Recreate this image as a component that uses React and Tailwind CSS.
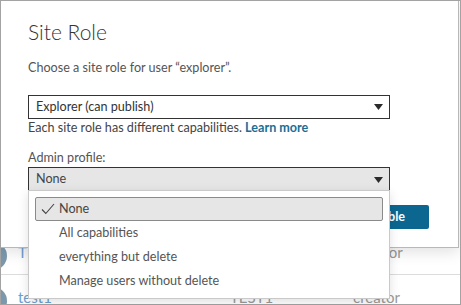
import React from 'react';

const font = { fontFamily: 'Lato, "Open Sans", sans-serif' };

const Caret = () => (
    <svg width="9" height="6" viewBox="0 0 9 6" className="shrink-0">
        <path d="M0 0 H9 L4.5 6 Z" fill="#2b2b2b" />
    </svg>
);

const Check = () => (
    <svg width="14" height="12" viewBox="0 0 14 12">
        <path d="M1 6.5 L4.8 10.5 L13 1" fill="none" stroke="#444" strokeWidth="1.1" />
    </svg>
);

const options = ['None', 'All capabilities', 'everything but delete', 'Manage users without delete'];

const users = [
    { name: 'T', full: '', role: 'Creator' },
    { name: 'test1', full: 'TEST1', role: 'creator' },
];

export default function App() {
    return (
        <div className="w-[461px] h-[305px] relative overflow-hidden bg-white text-[12.6px]" style={font}>
            {/* page behind the dialog */}
            <div className="pt-[230px]">
                {users.map((u, i) => (
                    <div key={i} className="flex items-center h-[45px] border-b border-[#dcdcdc] text-[15px]">
                        <div className="w-[28px] h-[28px] rounded-full bg-[#7b98ad] -ml-[21px] mr-[11px] mt-[8px] shrink-0"></div>
                        <span className="text-[#6d9ed0] w-[212px]">{u.name}</span>
                        <span className="text-[#9a9a9a] w-[123px]">{u.full}</span>
                        <span className="text-[#9a9a9a]">{u.role}</span>
                    </div>
                ))}
            </div>

            {/* dialog */}
            <div className="absolute left-0 top-0 w-[459px] h-[248px] bg-white border border-[#b8b8b8] shadow-[0_4px_14px_rgba(0,0,0,0.12)] pl-[27px] pr-[29px] pt-[17px]">
                <h2 className="text-[21px] font-light text-[#333] leading-[28px]">Site Role</h2>
                <p className="mt-[14px] text-[#555] leading-[16px]">Choose a site role for user “explorer”.</p>

                <div className="mt-[19px] w-[362px] h-[24px] border border-[#333] flex items-center justify-between pl-[7px] pr-[6px] text-[#333]">
                    <span>Explorer (can publish)</span>
                    <Caret />
                </div>
                <p className="mt-[1px] text-[#444] leading-[16px]">
                    Each site role has different capabilities. <span className="font-bold text-[#1a6e96]">Learn more</span>
                </p>

                <p className="mt-[14px] text-[#555] leading-[16px]">Admin profile:</p>
                <div className="relative mt-[1px] w-[362px]">
                    <div className="h-[24px] bg-[#e6e6e6] border border-b-0 border-[#333] flex items-center justify-between pl-[7px] pr-[6px] text-[#444]">
                        <span>None</span>
                        <Caret />
                    </div>

                    {/* open menu */}
                    <div className="absolute left-0 top-[23px] z-10 w-[362px] bg-white border border-[#c9c9c9] shadow-[0_3px_10px_rgba(0,0,0,0.12)] pt-[6px] pb-[5px] px-[6px]">
                        {options.map((o, i) => (
                            <div
                                key={o}
                                className={
                                    i === 0
                                        ? 'h-[24px] flex items-center bg-[#e6e6e6] border border-[#8a8a8a] rounded-[2px] text-[#444]'
                                        : 'h-[24px] flex items-center border border-transparent text-[#555]'
                                }
                            >
                                <span className="w-[23px] pl-[5px] flex items-center">{i === 0 ? <Check /> : null}</span>
                                <span>{o}</span>
                            </div>
                        ))}
                    </div>
                </div>

                <div className="flex justify-end gap-[10px] mt-[14px]">
                    <button className="h-[24px] px-[14px] rounded-[2px] border border-[#bbb] text-[#333] font-bold">Cancel</button>
                    <button className="h-[24px] pl-[14px] pr-[24px] rounded-[2px] bg-[#0b6790] text-white font-bold">Enable</button>
                </div>
            </div>

            {/* screenshot frame */}
            <div className="absolute inset-0 border border-[#a3a3a3] pointer-events-none"></div>
        </div>
    );
}
